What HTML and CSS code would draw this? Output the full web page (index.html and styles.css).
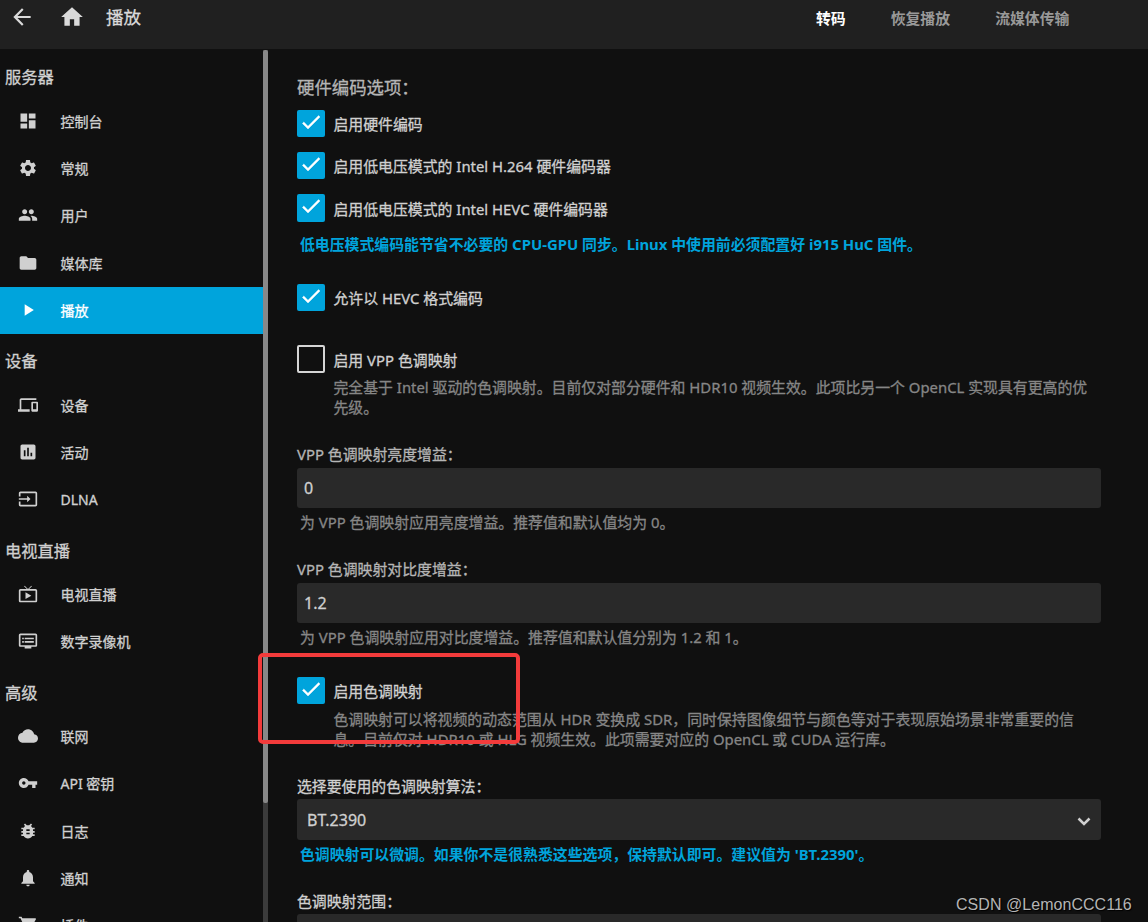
FILE: index.html
```html
<!DOCTYPE html>
<html lang="zh-CN">
<head>
<meta charset="utf-8">
<title>播放</title>
<link rel="stylesheet" href="styles.css">
</head>
<body>
<header class="topbar">
  <svg class="top-icon back" viewBox="0 0 24 24"><path d="M20 11H7.83l5.59-5.59L12 4l-8 8 8 8 1.41-1.41L7.83 13H20v-2z"/></svg>
  <svg class="top-icon home" viewBox="0 0 24 24"><path d="M10 20v-6h4v6h5v-8h3L12 3 2 12h3v8z"/></svg>
  <h1 class="page-title">播放</h1>
  <nav class="tabs"><a class="tab active">转码</a><a class="tab">恢复播放</a><a class="tab">流媒体传输</a></nav>
</header>
<div class="body">
  <aside class="sidebar">
    <h2 class="group">服务器</h2>
    <a class="item"><svg viewBox="0 0 24 24"><path d="M3 13h8V3H3v10zm0 8h8v-6H3v6zm10 0h8V11h-8v10zm0-18v6h8V3h-8z"/></svg><span>控制台</span></a>
    <a class="item"><svg viewBox="0 0 24 24"><path d="M19.14 12.94c.04-.3.06-.61.06-.94 0-.32-.02-.64-.07-.94l2.03-1.58c.18-.14.23-.41.12-.61l-1.92-3.32c-.12-.22-.37-.29-.59-.22l-2.39.96c-.5-.38-1.03-.7-1.62-.94l-.36-2.54c-.04-.24-.24-.41-.48-.41h-3.84c-.24 0-.43.17-.47.41l-.36 2.54c-.59.24-1.13.57-1.62.94l-2.39-.96c-.22-.08-.47 0-.59.22L2.74 8.87c-.12.21-.08.47.12.61l2.03 1.58c-.05.3-.09.63-.09.94s.02.64.07.94l-2.03 1.58c-.18.14-.23.41-.12.61l1.92 3.32c.12.22.37.29.59.22l2.39-.96c.5.38 1.03.7 1.62.94l.36 2.54c.05.24.24.41.48.41h3.84c.24 0 .44-.17.47-.41l.36-2.54c.59-.24 1.13-.56 1.62-.94l2.39.96c.22.08.47 0 .59-.22l1.92-3.32c.12-.22.07-.47-.12-.61l-2.01-1.58zM12 15.6c-1.98 0-3.6-1.62-3.6-3.6s1.62-3.6 3.6-3.6 3.6 1.62 3.6 3.6-1.62 3.6-3.6 3.6z"/></svg><span>常规</span></a>
    <a class="item"><svg viewBox="0 0 24 24"><path d="M16 11c1.66 0 2.99-1.34 2.99-3S17.66 5 16 5s-3 1.34-3 3 1.34 3 3 3zm-8 0c1.66 0 2.99-1.34 2.99-3S9.66 5 8 5 5 6.34 5 8s1.34 3 3 3zm0 2c-2.33 0-7 1.17-7 3.5V19h14v-2.5c0-2.33-4.67-3.5-7-3.5zm8 0c-.29 0-.62.02-.97.05 1.16.84 1.97 1.97 1.97 3.45V19h6v-2.5c0-2.33-4.67-3.5-7-3.5z"/></svg><span>用户</span></a>
    <a class="item"><svg viewBox="0 0 24 24"><path d="M10 4H4c-1.1 0-1.99.9-1.99 2L2 18c0 1.1.9 2 2 2h16c1.1 0 2-.9 2-2V8c0-1.1-.9-2-2-2h-8l-2-2z"/></svg><span>媒体库</span></a>
    <a class="item selected"><svg viewBox="0 0 24 24"><path d="M8 5v14l11-7z"/></svg><span>播放</span></a>
    <h2 class="group">设备</h2>
    <a class="item"><svg viewBox="0 0 24 24"><path d="M4 6h18V4H4c-1.1 0-2 .9-2 2v11H0v3h14v-3H4V6zm19 2h-6c-.55 0-1 .45-1 1v10c0 .55.45 1 1 1h6c.55 0 1-.45 1-1V9c0-.55-.45-1-1-1zm-1 9h-4v-7h4v7z"/></svg><span>设备</span></a>
    <a class="item"><svg viewBox="0 0 24 24"><path d="M19 3H5c-1.1 0-2 .9-2 2v14c0 1.1.9 2 2 2h14c1.1 0 2-.9 2-2V5c0-1.1-.9-2-2-2zM9 17H7v-7h2v7zm4 0h-2V7h2v10zm4 0h-2v-4h2v4z"/></svg><span>活动</span></a>
    <a class="item"><svg viewBox="0 0 24 24"><path d="M21 3.01H3c-1.1 0-2 .9-2 2V9h2V4.99h18v14.03H3V15H1v4.01c0 1.1.9 1.98 2 1.98h18c1.1 0 2-.88 2-1.98v-14c0-1.11-.9-2-2-2zM11 16l4-4-4-4v3H1v2h10v3z"/></svg><span>DLNA</span></a>
    <h2 class="group">电视直播</h2>
    <a class="item"><svg viewBox="0 0 24 24"><path d="M21 6h-7.59l3.29-3.29L16 2l-4 4-4-4-.71.71L10.59 6H3c-1.1 0-2 .89-2 2v12c0 1.1.9 2 2 2h18c1.1 0 2-.9 2-2V8c0-1.11-.9-2-2-2zm0 14H3V8h18v12zM9 10v8l7-4z"/></svg><span>电视直播</span></a>
    <a class="item"><svg viewBox="0 0 24 24"><path d="M21 3H3c-1.1 0-2 .9-2 2v12c0 1.1.9 2 2 2h5v2h8v-2h5c1.1 0 1.99-.9 1.99-2L23 5c0-1.1-.9-2-2-2zm0 14H3V5h18v12zm-2-9H8v2h11V8zm0 4H8v2h11v-2zM7 8H5v2h2V8zm0 4H5v2h2v-2z"/></svg><span>数字录像机</span></a>
    <h2 class="group">高级</h2>
    <a class="item"><svg viewBox="0 0 24 24"><path d="M19.35 10.04C18.67 6.59 15.64 4 12 4 9.11 4 6.6 5.64 5.35 8.04 2.34 8.36 0 10.91 0 14c0 3.31 2.69 6 6 6h13c2.76 0 5-2.24 5-5 0-2.64-2.05-4.78-4.65-4.96z"/></svg><span>联网</span></a>
    <a class="item"><svg viewBox="0 0 24 24"><path d="M12.65 10C11.83 7.67 9.61 6 7 6c-3.31 0-6 2.69-6 6s2.69 6 6 6c2.61 0 4.83-1.67 5.65-4H17v4h4v-4h2v-4H12.65zM7 14c-1.1 0-2-.9-2-2s.9-2 2-2 2 .9 2 2-.9 2-2 2z"/></svg><span>API 密钥</span></a>
    <a class="item"><svg viewBox="0 0 24 24"><path d="M20 8h-2.81c-.45-.78-1.07-1.45-1.82-1.96L17 4.41 15.59 3l-2.17 2.17C12.96 5.06 12.49 5 12 5s-.96.06-1.41.17L8.41 3 7 4.41l1.62 1.63C7.88 6.55 7.26 7.22 6.81 8H4v2h2.09c-.05.33-.09.66-.09 1v1H4v2h2v1c0 .34.04.67.09 1H4v2h2.81c1.04 1.79 2.97 3 5.19 3s4.15-1.21 5.19-3H20v-2h-2.09c.05-.33.09-.66.09-1v-1h2v-2h-2v-1c0-.34-.04-.67-.09-1H20V8zm-6 8h-4v-2h4v2zm0-4h-4v-2h4v2z"/></svg><span>日志</span></a>
    <a class="item"><svg viewBox="0 0 24 24"><path d="M12 22c1.1 0 2-.9 2-2h-4c0 1.1.89 2 2 2zm6-6v-5c0-3.07-1.64-5.64-4.5-6.32V4c0-.83-.67-1.5-1.5-1.5s-1.5.67-1.5 1.5v.68C7.63 5.36 6 7.92 6 11v5l-2 2v1h16v-1l-2-2z"/></svg><span>通知</span></a>
    <a class="item"><svg viewBox="0 0 24 24"><path d="M7 18c-1.1 0-1.99.9-1.99 2S5.9 22 7 22s2-.9 2-2-.9-2-2-2zM1 2v2h2l3.6 7.59-1.35 2.45C4.52 15.37 5.48 17 7 17h12v-2H7.42l1.13-2h7.45c.75 0 1.41-.41 1.75-1.03l3.58-6.49A1 1 0 0 0 20 4H5.21l-.94-2H1zm16 16c-1.1 0-1.99.9-1.99 2s.89 2 1.99 2 2-.9 2-2-.9-2-2-2z"/></svg><span>插件</span></a>
  </aside>
  <div class="scrollbar"><div class="thumb"></div></div>
  <main class="content">
    <h2 class="section-title">硬件编码选项：</h2>
    <div class="checks">
      <label class="check"><span class="box on"><svg viewBox="0 0 24 24"><path d="M9 16.17L4.83 12l-1.42 1.41L9 19 21 7l-1.41-1.41z"/></svg></span><span>启用硬件编码</span></label>
      <label class="check"><span class="box on"><svg viewBox="0 0 24 24"><path d="M9 16.17L4.83 12l-1.42 1.41L9 19 21 7l-1.41-1.41z"/></svg></span><span>启用低电压模式的 Intel H.264 硬件编码器</span></label>
      <label class="check lower"><span class="box on tall"><svg viewBox="0 0 24 24"><path d="M9 16.17L4.83 12l-1.42 1.41L9 19 21 7l-1.41-1.41z"/></svg></span><span>启用低电压模式的 Intel HEVC 硬件编码器</span></label>
    </div>
    <p class="note low-power">低电压模式编码能节省不必要的 CPU-GPU 同步。Linux 中使用前必须配置好 i915 HuC 固件。</p>
    <label class="check hevc"><span class="box on"><svg viewBox="0 0 24 24"><path d="M9 16.17L4.83 12l-1.42 1.41L9 19 21 7l-1.41-1.41z"/></svg></span><span>允许以 HEVC 格式编码</span></label>
    <label class="check lower vpp"><span class="box"></span><span>启用 VPP 色调映射</span></label>
    <p class="desc">完全基于 Intel 驱动的色调映射。目前仅对部分硬件和 HDR10 视频生效。此项比另一个 OpenCL 实现具有更高的优<br>先级。</p>
    <div class="field">
      <div class="label">VPP 色调映射亮度增益：</div>
      <div class="input">0</div>
      <p class="hint">为 VPP 色调映射应用亮度增益。推荐值和默认值均为 0。</p>
    </div>
    <div class="field">
      <div class="label">VPP 色调映射对比度增益：</div>
      <div class="input">1.2</div>
      <p class="hint">为 VPP 色调映射应用对比度增益。推荐值和默认值分别为 1.2 和 1。</p>
    </div>
    <label class="check tonemap"><span class="box on"><svg viewBox="0 0 24 24"><path d="M9 16.17L4.83 12l-1.42 1.41L9 19 21 7l-1.41-1.41z"/></svg></span><span>启用色调映射</span></label>
    <p class="desc">色调映射可以将视频的动态范围从 HDR 变换成 SDR，同时保持图像细节与颜色等对于表现原始场景非常重要的信<br>息。目前仅对 HDR10 或 HLG 视频生效。此项需要对应的 OpenCL 或 CUDA 运行库。</p>
    <div class="field">
      <div class="label strong">选择要使用的色调映射算法：</div>
      <div class="input select">BT.2390<svg viewBox="0 0 14 9"><path d="M1.5 1.5 7 7l5.5-5.5"/></svg></div>
      <p class="note">色调映射可以微调。如果你不是很熟悉这些选项，保持默认即可。建议值为 'BT.2390'。</p>
    </div>
    <div class="field">
      <div class="label strong">色调映射范围：</div>
      <div class="input select"></div>
    </div>
  </main>
</div>
<div class="highlight"></div>
<div class="watermark">CSDN @LemonCCC116</div>
</body>
</html>
```
FILE: styles.css
```css
* { box-sizing: border-box; }
body {
  margin: 0;
  height: 922px;
  overflow: hidden;
  position: relative;
  background: #101010;
  color: #d0d0d0;
  font: 400 14.88px/20px "Noto Sans", "Noto Sans CJK SC", sans-serif;
  -webkit-text-stroke: 0.3px;
}
h1, h2, p { margin: 0; font-weight: 400; }
svg { display: block; fill: currentColor; flex: none; }

.topbar {
  height: 49px;
  background: #202020;
  display: flex;
  align-items: flex-start;
  padding: 4px 78.5px 0 9px;
}
.top-icon { width: 26px; height: 26px; color: #dadada; }
.home { margin-left: 24px; }
.page-title { margin: 1px 0 0 21px; font-size: 17.5px; line-height: 24px; color: #dadada; }
.tabs { display: flex; gap: 45px; margin: 4px 0 0 auto; }
.tab { font-weight: 700; color: #999; -webkit-text-stroke: 0; }
.tab.active { color: #fff; }

.body { display: flex; height: 873px; overflow: hidden; }
.sidebar { width: 263px; flex: none; padding-top: 1.4px; }
.group { height: 47.33px; padding: 14px 0 0 5px; font-size: 16.3px; line-height: 26px; }
.item { height: 47.33px; display: flex; align-items: center; padding: 0 0 0 18px; font-size: 14px; }
.item svg { width: 20px; height: 20px; margin: 0 22.5px 1.4px 0; }
.item span { padding-top: 0.6px; }
.item.selected { background: #00a4dc; color: #fff; }
.scrollbar { width: 5px; flex: none; padding-top: 1px; background: linear-gradient(#101010 1px, #3b3b3b 1px); }
.thumb { height: 753px; border-radius: 2px; background: #888; }

.content { width: 833px; flex: none; padding: 26px 0 0 29px; }
.section-title { font-size: 17.4px; line-height: 24px; color: #b5b5b5; }
.checks { display: grid; gap: 14px; margin-top: 11px; }
.check { display: flex; gap: 8.5px; height: 28px; line-height: 28px; }
.check.lower { line-height: 30px; }
.box { width: 28px; height: 28px; border: 2px solid #d5d5d5; border-radius: 2px; flex: none; }
.box.on { height: 27px; border: 0; background: #00a4dc; color: #fff; padding: 0 2px; }
.box.on.tall { height: 28px; }
.box svg { width: 24px; height: 24px; stroke: currentColor; stroke-width: 0.4; }
.note { padding-left: 3px; font-weight: 700; color: #00a4dc; -webkit-text-stroke: 0; }
.low-power { margin-top: 12px; }
.hevc { margin-top: 30px; }
.vpp { margin-top: 33px; }
.desc { margin-top: 3.5px; padding-left: 36.5px; line-height: 20.4px; color: #868686; white-space: nowrap; }
.field { margin-top: 27px; }
.label { color: #b5b5b5; }
.label.strong { color: #d0d0d0; }
.input { height: 40px; margin-top: 4px; padding: 0 7px; border-radius: 3px; background: #292929; font-size: 16px; line-height: 40px; }
.select { height: 41px; margin-top: 3px; padding: 0 10px; line-height: 43px; display: flex; justify-content: space-between; align-items: flex-start; }
.select svg { width: 14px; height: 9px; margin-top: 18.5px; fill: none; stroke: #d0d0d0; stroke-width: 2.5; }
.hint { margin-top: 4px; padding-left: 3px; color: #868686; }
.select + .note { margin-top: 4px; }
.tonemap { margin-top: 30px; line-height: 29px; }
.tonemap + .desc { margin-top: 3.7px; }
.tonemap + .desc + .field { margin-top: 26px; }

.highlight { position: absolute; left: 258px; top: 653px; width: 262px; height: 91px; border: 4px solid #f33b3b; border-radius: 5px; }
.watermark { position: absolute; left: 956px; top: 893px; font: 400 16px/24px "Liberation Sans", sans-serif; letter-spacing: 0.04px; color: #b5b5b5; white-space: nowrap; -webkit-text-stroke: 0; text-shadow: 1px 1px 1px #000; }
```
